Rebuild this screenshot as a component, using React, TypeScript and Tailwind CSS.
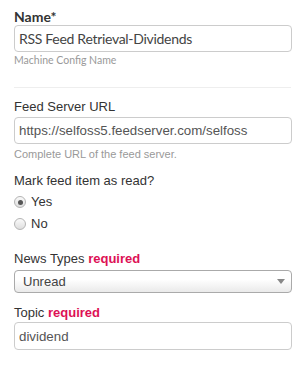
import React, { useState } from "react";

const Radio = ({ checked, label, onClick }: { checked: boolean; label: string; onClick: () => void }) => (
  <label className="flex items-center h-[20px] cursor-pointer" onClick={onClick}>
    <span className="w-[12px] h-[12px] rounded-full border border-[#b4b4b4] bg-gradient-to-b from-[#fafafa] to-[#dedede] flex items-center justify-center">
      {checked && <span className="w-[5px] h-[5px] rounded-full bg-[#555]" />}
    </span>
    <span className="ml-[5px] text-[13px] text-[#333]">{label}</span>
  </label>
);

const App = () => {
  const [name, setName] = useState("RSS Feed Retrieval-Dividends");
  const [url, setUrl] = useState("https://selfoss5.feedserver.com/selfoss");
  const [markRead, setMarkRead] = useState(true);
  const [newsType, setNewsType] = useState("Unread");
  const [topic, setTopic] = useState("dividend");

  return (
    <div className="w-[308px] h-[376px] bg-white pl-[14px] pr-[16px] pt-[8px] font-['Liberation_Sans',Arial,sans-serif]">
      <div className="font-['Lato','Open_Sans',sans-serif]">
        <div className="text-[14px] leading-[17px] font-bold text-[#333]">Name*</div>
        <input
          value={name}
          onChange={(e) => setName(e.target.value)}
          className="block w-full h-[27px] px-[4px] border border-[#ccc] rounded-[4px] text-[14px] tracking-[-0.3px] text-[#444] outline-none"
        />
        <div className="mt-[1px] text-[10.5px] leading-[14px] text-[#999]">Machine Config Name</div>
      </div>

      <hr className="mt-[20px] mr-[1px] border-0 h-px bg-[#eee]" />

      <div className="mt-[10px] text-[13px] leading-[18px] text-[#333]">Feed Server URL</div>
      <input
        value={url}
        onChange={(e) => setUrl(e.target.value)}
        className="block mt-[1px] w-full h-[27px] px-[4px] border border-[#ccc] rounded-[4px] text-[13.3px] text-[#555] outline-none"
      />
      <div className="mt-[3px] text-[11px] leading-[14px] text-[#999]">Complete URL of the feed server.</div>

      <div className="mt-[11px] text-[13px] leading-[18px] text-[#333]">Mark feed item as read?</div>
      <div className="mt-[2px] flex flex-col gap-[2px]">
        <Radio checked={markRead} label="Yes" onClick={() => setMarkRead(true)} />
        <Radio checked={!markRead} label="No" onClick={() => setMarkRead(false)} />
      </div>

      <div className="mt-[16px] text-[13px] leading-[18px] text-[#333]">
        News Types <span className="font-bold text-[#dd1155]">required</span>
      </div>
      <div className="relative mt-[1px] h-[23px]">
        <select
          value={newsType}
          onChange={(e) => setNewsType(e.target.value)}
          className="appearance-none w-full h-full pl-[8px] border border-[#aaa] rounded-[4px] bg-gradient-to-b from-white from-40% to-[#eaeaea] text-[13px] text-[#444] outline-none"
        >
          <option>Unread</option>
          <option>Read</option>
          <option>All</option>
        </select>
        <svg className="absolute right-[7px] top-[10px] pointer-events-none" width="8" height="5" viewBox="0 0 8 5">
          <path d="M0 0h8L4 5z" fill="#888" />
        </svg>
      </div>

      <div className="mt-[12px] text-[13px] leading-[18px] text-[#333]">
        Topic <span className="font-bold text-[#dd1155]">required</span>
      </div>
      <input
        value={topic}
        onChange={(e) => setTopic(e.target.value)}
        className="block w-full h-[28px] px-[4px] border border-[#ccc] rounded-[4px] text-[13.3px] text-[#555] outline-none"
      />
    </div>
  );
};

export default App;
